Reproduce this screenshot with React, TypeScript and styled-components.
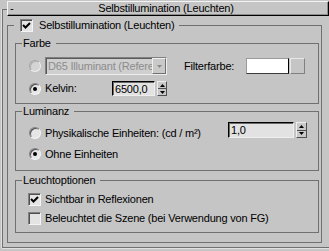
import React from 'react'
import styled, { createGlobalStyle, css } from 'styled-components'

const GlobalStyle = createGlobalStyle`
  html, body {
    margin: 0;
    padding: 0;
    background: #c5c5c5;
  }

  body {
    font-family: 'Liberation Sans', Arial, sans-serif;
    font-size: 11px;
    letter-spacing: -0.2px;
    color: #000;
  }
`

const Page = styled.div`
  width: 329px;
  height: 251px;
  overflow: hidden;
  padding-top: 9px;
  box-sizing: border-box;
`

const Rollout = styled.div`
  margin-left: 2px;
  width: 340px;
  border: 1px solid #707070;
  border-right: none;
  box-shadow: -1px 0 0 #e0e0e0, 0 1px 0 #e0e0e0;
`

const TitleBar = styled.div`
  margin: -9px 0 0 4px;
  width: 322px;
  height: 15px;
  box-sizing: border-box;
  display: grid;
  grid-template-columns: 18px 1fr 22px;
  align-items: center;
  line-height: 13px;
  background: #c5c5c5;
  border: 1px solid;
  border-color: #f4f4f4 #000 #000 #f4f4f4;
  box-shadow: inset -1px -1px 0 #8c8c8c;

  .dash {
    padding-left: 2px;
  }

  .title {
    text-align: center;
    white-space: nowrap;
  }
`

const Group = styled.fieldset<{ $mt: number; $main?: boolean }>`
  margin: ${({ $mt }) => $mt}px 0 0 0;
  padding: 0;
  min-width: 0;
  border: 1px solid #707070;

  ${({ $main }) =>
    $main &&
    css`
      width: 315px;
      box-sizing: border-box;
      margin: 3px 0 4px 4px;
    `}
`

const Legend = styled.legend<{ $pl?: number }>`
  margin-left: 6px;
  padding: 0 5px 0 ${({ $pl }) => $pl ?? 1}px;
  height: 13px;
  line-height: 13px;
  white-space: nowrap;

  .inner {
    display: flex;
    align-items: center;
    height: 13px;
    gap: 6px;
  }
`

const Body = styled.div<{ $pad: string }>`
  padding: ${({ $pad }) => $pad};
`

const Row = styled.div<{ $h: number; $mt?: number; $top?: boolean }>`
  display: flex;
  align-items: ${({ $top }) => ($top ? 'flex-start' : 'center')};
  height: ${({ $h }) => $h}px;
  margin-top: ${({ $mt }) => $mt ?? 0}px;
`

const Option = styled.div<{ $mt?: number }>`
  display: flex;
  align-items: center;
  height: 12px;
  margin-top: ${({ $mt }) => $mt ?? 0}px;
`

const Label = styled.span<{ $w?: number; $ml?: number }>`
  margin-left: ${({ $ml }) => $ml ?? 4}px;
  ${({ $w }) => $w && `width: ${$w}px; flex: none;`}
  line-height: 13px;
  white-space: nowrap;
`

const Radio = styled.span<{ $checked?: boolean; $disabled?: boolean }>`
  position: relative;
  flex: none;
  width: 12px;
  height: 12px;
  box-sizing: border-box;
  border-radius: 50%;
  border: 1px solid;
  border-color: ${({ $disabled }) =>
    $disabled ? '#a6a6a6 #eeeeee #eeeeee #a6a6a6' : '#808080 #f4f4f4 #f4f4f4 #808080'};
  background: ${({ $disabled }) => ($disabled ? '#d4d4d4' : '#e6e6e6')};
  box-shadow: inset 1px 1px 0 ${({ $disabled }) => ($disabled ? '#b4b4b4' : '#505050')};

  ${({ $checked }) =>
    $checked &&
    css`
      &::after {
        content: '';
        position: absolute;
        left: 3px;
        top: 3px;
        width: 4px;
        height: 4px;
        border-radius: 50%;
        background: #000;
      }
    `}
`

const CheckBox = styled.span`
  flex: none;
  display: flex;
  align-items: center;
  justify-content: center;
  width: 13px;
  height: 13px;
  box-sizing: border-box;
  border: 1px solid;
  border-color: #808080 #f4f4f4 #f4f4f4 #808080;
  box-shadow: inset 1px 1px 0 #505050;
  background: #e4e4e4;
`

const Combo = styled.div`
  display: flex;
  flex: none;
  width: 122px;
  height: 18px;
  margin-left: 4px;
  box-sizing: border-box;
  border: 1px solid;
  border-color: #808080 #eeeeee #eeeeee #808080;
  box-shadow: inset 1px 1px 0 #5a5a5a;
  background: #cfcfcf;

  .text {
    flex: 1;
    min-width: 0;
    overflow: hidden;
    white-space: nowrap;
    padding-left: 2px;
    line-height: 16px;
    color: #8c8c8c;
  }
`

const ComboButton = styled.span`
  display: flex;
  align-items: center;
  justify-content: center;
  width: 14px;
  flex: none;
  box-sizing: border-box;
  border: 1px solid;
  border-color: #f0f0f0 #707070 #707070 #f0f0f0;
  background: #c9c9c9;
`

const Swatch = styled.span`
  flex: none;
  width: 43px;
  height: 16px;
  box-sizing: border-box;
  background: #fff;
  border: 1px solid;
  border-color: #9a9a9a #000 #3c3c3c #9a9a9a;
`

const SwatchButton = styled.span`
  flex: none;
  width: 15px;
  height: 16px;
  margin-left: 1px;
  box-sizing: border-box;
  background: #c5c5c5;
  border: 1px solid;
  border-color: #e8e8e8 #808080 #808080 #e8e8e8;
`

const Field = styled.div<{ $w: number }>`
  flex: none;
  width: ${({ $w }) => $w}px;
  height: 100%;
  box-sizing: border-box;
  border: 1px solid;
  border-color: #000 #eeeeee #eeeeee #000;
  box-shadow: inset 1px 1px 0 #6a6a6a;
  background: #e2e2e2;
  padding-left: 2px;
  line-height: 14px;
  white-space: nowrap;
`

const Spin = styled.div<{ $w: number }>`
  flex: none;
  display: flex;
  flex-direction: column;
  width: ${({ $w }) => $w}px;
  height: 100%;
  margin-left: 2px;
  box-sizing: border-box;
  border: 1px solid;
  border-color: #eeeeee #505050 #505050 #eeeeee;
  background: #c9c9c9;

  .half {
    flex: 1;
    display: flex;
    align-items: center;
    justify-content: center;
  }

  .half + .half {
    border-top: 1px solid #505050;
  }
`

const Tick = () => (
  <svg width='9' height='9' viewBox='0 0 9 9'>
    <polyline points='1,4 3.5,6.5 8,2' fill='none' stroke='#000' strokeWidth='2' />
  </svg>
)

const Arrow = ({ up, color = '#000' }: { up?: boolean; color?: string }) => (
  <svg width='5' height='3' viewBox='0 0 5 3'>
    <polygon points={up ? '2.5,0 5,3 0,3' : '0,0 5,0 2.5,3'} fill={color} />
  </svg>
)

const Spinner = ({ value, fieldW, spinW }: { value: string; fieldW: number; spinW: number }) => (
  <>
    <Field $w={fieldW}>{value}</Field>
    <Spin $w={spinW}>
      <span className='half'>
        <Arrow up />
      </span>
      <span className='half'>
        <Arrow />
      </span>
    </Spin>
  </>
)

export default function App() {
  return (
    <Page>
      <GlobalStyle />
      <Rollout>
        <TitleBar>
          <span className='dash'>-</span>
          <span className='title'>Selbstillumination (Leuchten)</span>
          <span />
        </TitleBar>

        <Group $mt={3} $main>
          <Legend $pl={6}>
            <span className='inner'>
              <CheckBox>
                <Tick />
              </CheckBox>
              <span>Selbstillumination (Leuchten)</span>
            </span>
          </Legend>
          <Body $pad='0 2px 9px 7px'>
            <Group $mt={5}>
              <Legend>Farbe</Legend>
              <Body $pad='7px 0 7px 13px'>
                <Row $h={18}>
                  <Radio $disabled />
                  <Combo>
                    <span className='text'>D65 Illuminant (Referenz)</span>
                    <ComboButton>
                      <Arrow color='#8a8a8a' />
                    </ComboButton>
                  </Combo>
                  <Label $ml={17} $w={62}>
                    Filterfarbe:
                  </Label>
                  <Swatch />
                  <SwatchButton />
                </Row>
                <Row $h={15} $mt={6}>
                  <Radio $checked />
                  <Label $w={67}>Kelvin:</Label>
                  <Spinner value='6500,0' fieldW={43} spinW={10} />
                </Row>
              </Body>
            </Group>

            <Group $mt={1}>
              <Legend>Luminanz</Legend>
              <Body $pad='4px 0 10px 13px'>
                <Row $h={16} $top>
                  <Option $mt={5}>
                    <Radio />
                    <Label $w={183}>Physikalische Einheiten: (cd / m²)</Label>
                  </Option>
                  <Spinner value='1,0' fieldW={66} spinW={11} />
                </Row>
                <Option $mt={10}>
                  <Radio $checked />
                  <Label>Ohne Einheiten</Label>
                </Option>
              </Body>
            </Group>

            <Group $mt={3}>
              <Legend>Leuchtoptionen</Legend>
              <Body $pad='6px 0 7px 12px'>
                <Row $h={13}>
                  <CheckBox>
                    <Tick />
                  </CheckBox>
                  <Label>Sichtbar in Reflexionen</Label>
                </Row>
                <Row $h={13} $mt={6}>
                  <CheckBox />
                  <Label>Beleuchtet die Szene (bei Verwendung von FG)</Label>
                </Row>
              </Body>
            </Group>
          </Body>
        </Group>
      </Rollout>
    </Page>
  )
}
